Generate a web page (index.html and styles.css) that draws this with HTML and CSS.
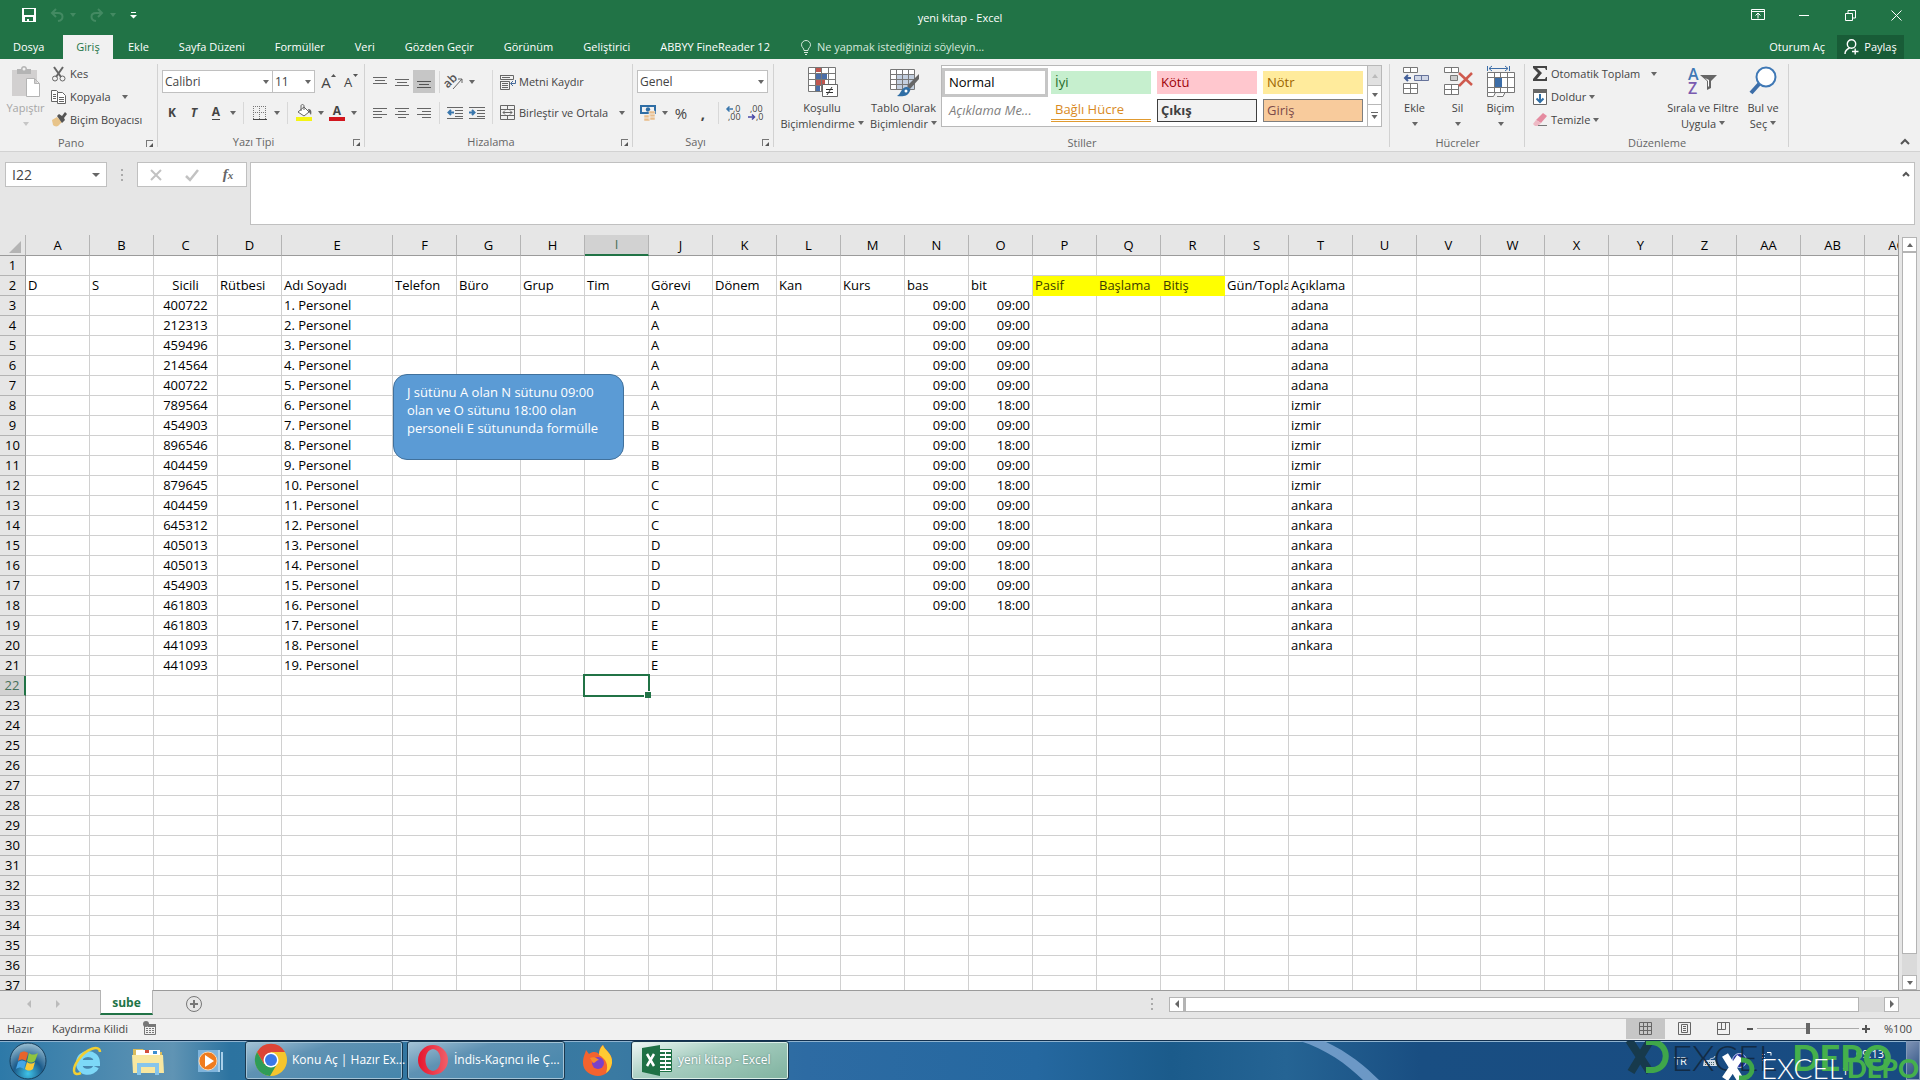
FILE: index.html
```html
<!DOCTYPE html>
<html lang="tr">
<head>
<meta charset="utf-8">
<title>yeni kitap - Excel</title>
<link rel="stylesheet" href="styles.css">
</head>
<body>
<div class="app">
  <header class="titlebar">
    <div class="quick">
      <button aria-label="Kaydet"><svg width="14" height="14" viewBox="0 0 14 14"><path fill="#fff" fill-rule="evenodd" d="M0 0h14v14H0zM2 1v6h10V1zM3 9v4h2v-2h2v2h4V9z"/></svg></button>
      <button class="dim" aria-label="Geri Al"><svg width="14" height="14" viewBox="0 0 14 14"><path fill="none" stroke="#438a62" stroke-width="2" d="M6 1 2 5l4 4M2 5h6c6 0 6 7 0 8"/></svg><i class="caret"></i></button>
      <button class="dim" aria-label="Yinele"><svg width="14" height="14" viewBox="0 0 14 14"><path fill="none" stroke="#438a62" stroke-width="2" d="m8 1 4 4-4 4M12 5H6c-6 0-6 7 0 8"/></svg><i class="caret"></i></button>
      <button aria-label="Özelleştir"><svg width="7" height="7" viewBox="0 0 7 7"><path fill="#fff" d="M1 0h5v1H1zM0 3h7L3.500 6.500z"/></svg></button>
    </div>
    <h1>yeni kitap - Excel</h1>
    <div class="window-buttons">
      <button aria-label="Şerit Görüntüleme"><svg width="14" height="12" viewBox="0 0 14 12" fill="none" stroke="#fff"><path d="M.5.5h13v10H.5zM.5 2.500h13M7 9.500v-5M4.500 6.500 7 4l2.500 2.500"/></svg></button>
      <button aria-label="Simge Durumuna Küçült"><svg width="10" height="12" viewBox="0 0 10 12"><path stroke="#fff" d="M0 6.500h10"/></svg></button>
      <button aria-label="Önceki Boyut"><svg width="11" height="11" viewBox="0 0 11 11" fill="none" stroke="#fff"><path d="M.5 3.500h7v7h-7zM3 3V.5h7.500V8H8"/></svg></button>
      <button aria-label="Kapat"><svg width="11" height="11" viewBox="0 0 11 11"><path stroke="#fff" d="m.5.500 10 10M10.500.5l-10 10"/></svg></button>
    </div>
  </header>

  <nav class="tabs">
    <a href="#dosya" class="file">Dosya</a>
    <a href="#giris" class="active">Giriş</a>
    <a href="#ekle">Ekle</a>
    <a href="#sayfa">Sayfa Düzeni</a>
    <a href="#formuller">Formüller</a>
    <a href="#veri">Veri</a>
    <a href="#gozden">Gözden Geçir</a>
    <a href="#gorunum">Görünüm</a>
    <a href="#gelistirici">Geliştirici</a>
    <a href="#abbyy">ABBYY FineReader 12</a>
    <a href="#ara" class="tell"><svg width="12" height="15" viewBox="0 0 12 15" fill="none" stroke="#d5e8dc"><path d="M4 10.500C4 8 1.500 7.500 1.500 4.800a4.500 4.300 0 0 1 9 0C10.500 7.500 8 8 8 10.500zM4 12.500h4M5 14.500h2"/></svg>Ne yapmak istediğinizi söyleyin...</a>
    <span class="spacer"></span>
    <a href="#oturum" class="signin">Oturum Aç</a>
    <button class="share"><svg width="15" height="16" viewBox="0 0 15 16" fill="none" stroke="#fff" stroke-width="1.400"><circle cx="7.500" cy="5" r="4.200"/><path d="M1 15c0-3 2-5 4.500-6M8 12.500h6.500M11.200 9.500v6"/></svg>Paylaş</button>
  </nav>

  <section class="ribbon" aria-label="Giriş şeridi">
    <div class="group g-clip">
      <div class="content">
        <button class="big disabled"><svg width="32" height="32" viewBox="0 0 32 32"><path fill="#d2d0d0" d="M2 4h25v26H2z"/><path fill="#b4b4b4" d="M7 3h4c0-4 6-4 6 0h4v5H7z"/><circle cx="14" cy="3" r="1.500" fill="#f1f1f1"/><path fill="#fff" stroke="#b4b4b4" d="M16.500 12.500h8l5 5v13h-13zM24.500 12.500v5h5"/></svg><span>Yapıştır</span><i class="caret"></i></button>
        <div class="list">
          <button><svg width="16" height="16" viewBox="0 0 16 16" fill="none" stroke="#666"><path stroke-width="2" d="m3 1 7 10M12 1 5 11"/><circle cx="4" cy="12.500" r="2.500"/><circle cx="11.500" cy="12.500" r="2.500"/></svg>Kes</button>
          <button><svg width="16" height="16" viewBox="0 0 16 16" fill="#fff" stroke="#666"><path d="M.5 1.500h5l3 3v8h-8zM2 5.500h3M2 7.500h3M2 9.500h3"/><path d="M6.500 3.500h5l3 3v8h-8zM8 8.500h5M8 10.500h5M8 12.500h5"/></svg>Kopyala<i class="caret far"></i></button>
          <button><svg width="16" height="16" viewBox="0 0 16 16"><path fill="#e8c48a" d="M1 8 6 5l5 5-4 4c-2 1-4 0-5-1z"/><path fill="#555" d="m6 4 2-2 3 2 3-4 2 2-3 4 1 2-3 3z"/></svg>Biçim Boyacısı</button>
        </div>
      </div>
      <div class="label">Pano<button class="launcher" aria-label="Pano ayarları"></button></div>
    </div>

    <div class="group g-font">
      <div class="content rows">
        <div class="row fields">
          <span class="combo w-font"><select aria-label="Yazı tipi"><option>Calibri</option></select><i class="caret"></i></span>
          <span class="combo w-size"><select aria-label="Yazı boyutu"><option>11</option></select><i class="caret"></i></span>
          <button class="ic" aria-label="Büyüt"><span class="ltr">A</span><svg class="sup" width="5" height="3"><path fill="#555" d="M0 3h5L2.500 0z"/></svg></button>
          <button class="ic" aria-label="Küçült"><span class="ltr small">A</span><svg class="sup" width="5" height="3"><path fill="#555" d="M0 0h5L2.500 3z"/></svg></button>
        </div>
        <div class="row tools">
          <button class="ic"><b>K</b></button><button class="ic"><b><em>T</em></b></button><button class="ic"><b class="under">A</b></button><button class="drop" aria-label="Altı çizili seçenekleri"><i class="caret"></i></button>
          <span class="sep wide"></span>
          <button class="ic" aria-label="Kenarlıklar"><svg width="14" height="14" viewBox="0 0 14 14" fill="none" stroke="#777"><path stroke-dasharray="1 1" d="M0 .5h13M.5 0v13M12.500 0v13M6.500 0v13M0 6.500h13"/><path stroke="#444" d="M0 13.500h14"/></svg></button><button class="drop" aria-label="Kenarlık seçenekleri"><i class="caret"></i></button>
          <span class="sep wide"></span>
          <button class="ic" aria-label="Dolgu rengi"><svg width="18" height="18" viewBox="0 0 18 18"><path fill="#f4f413" d="M1 13h16v4H1z"/><path fill="#fff" stroke="#666" d="m9 3 5 5-5 4-6-4z"/><path fill="none" stroke="#666" d="M6 7V2c0-2 3-2 3 0v4"/><path fill="#666" d="M13 5c3 0 4 2 3 6l-2-3z"/></svg></button><button class="drop" aria-label="Dolgu seçenekleri"><i class="caret"></i></button>
          <button class="ic fontcolor"><b>A</b></button><button class="drop" aria-label="Yazı rengi seçenekleri"><i class="caret"></i></button>
        </div>
      </div>
      <div class="label">Yazı Tipi<button class="launcher" aria-label="Yazı tipi ayarları"></button></div>
    </div>

    <div class="group g-align">
      <div class="content">
        <div class="rows">
          <div class="row">
            <button class="ic" aria-label="Üste hizala"><svg width="14" height="14"><path stroke="#666" d="M0 2.500h14M2 5.500h10M0 8.500h14"/></svg></button><button class="ic" aria-label="Ortaya hizala"><svg width="14" height="14"><path stroke="#666" d="M0 4.500h14M2 7.500h10M0 10.500h14"/></svg></button><button class="ic on" aria-label="Alta hizala"><svg width="14" height="14"><path stroke="#555" d="M0 6.500h14M2 9.500h10M0 12.500h14"/></svg></button>
            <span class="sep"></span>
            <button class="ic" aria-label="Yönlendirme"><svg width="16" height="16" viewBox="0 0 16 16"><text x="-2" y="10" transform="rotate(-45 5 9)" font-size="12" font-weight="600" font-family="Open Sans, sans-serif" fill="#555">ab</text><path fill="none" stroke="#666" d="M6 15 15 5M11 5h4v4"/></svg></button><button class="drop" aria-label="Yönlendirme seçenekleri"><i class="caret"></i></button>
          </div>
          <div class="row">
            <button class="ic" aria-label="Sola hizala"><svg width="14" height="14"><path stroke="#666" d="M0 2.500h14M0 5.500h9M0 8.500h14M0 11.500h9"/></svg></button><button class="ic" aria-label="Ortala"><svg width="14" height="14"><path stroke="#666" d="M0 2.500h14M3 5.500h8M0 8.500h14M3 11.500h8"/></svg></button><button class="ic" aria-label="Sağa hizala"><svg width="14" height="14"><path stroke="#666" d="M0 2.500h14M5 5.500h9M0 8.500h14M5 11.500h9"/></svg></button>
            <span class="sep"></span>
            <button class="ic" aria-label="Girintiyi azalt"><svg width="16" height="14" fill="none"><path stroke="#666" d="M0 1.500h16M8 4.500h8M8 7.500h8M0 12.500h16M8 10.500h8"/><path stroke="#3a77ad" stroke-width="2" d="M7 6.500H1M4 4 1.500 6.500 4 9"/></svg></button><button class="ic" aria-label="Girintiyi artır"><svg width="16" height="14" fill="none"><path stroke="#666" d="M0 1.500h16M8 4.500h8M8 7.500h8M0 12.500h16M8 10.500h8"/><path stroke="#3a77ad" stroke-width="2" d="M0 6.500h6M3 4l2.500 2.500L3 9"/></svg></button>
          </div>
        </div>
        <span class="sep tall"></span>
        <div class="rows wraps">
          <button class="row"><svg width="16" height="16" viewBox="0 0 16 16" fill="none" stroke="#666"><path d="M.5 1v4.500h13V1.500H.5M2 3.500h8M.5 7v8.500h9V7.500H.5M2 9.500h6M2 11.500h6M2 13.500h6"/><path stroke="#44699a" d="M15.500 6v3.500H11M13 7l-2.500 2.500L13 12"/></svg>Metni Kaydır</button>
          <button class="row"><svg width="16" height="16" viewBox="0 0 16 16" fill="none" stroke="#666"><path d="M.5.5h14v14H.5zM.5 4.500h14M.5 10.500h14M7.500 1v3M7.500 11v3M3 7.500h9M5 5.500l-2 2 2 2M10 5.500l2 2-2 2"/></svg>Birleştir ve Ortala<i class="caret far"></i></button>
        </div>
      </div>
      <div class="label">Hizalama<button class="launcher" aria-label="Hizalama ayarları"></button></div>
    </div>

    <div class="group g-number">
      <div class="content rows">
        <div class="row"><span class="combo w-num"><select aria-label="Sayı biçimi"><option>Genel</option></select><i class="caret"></i></span></div>
        <div class="row">
          <button class="ic" aria-label="Para birimi"><svg width="16" height="16" viewBox="0 0 16 16"><path fill="none" stroke="#2f6ea5" stroke-width="2" d="M1 1h14v7H1z"/><circle cx="8" cy="4.500" r="2.200" fill="#2f6ea5"/><path fill="#e9bd8b" stroke="#f1f1f1" stroke-width=".5" d="M9 6h6v3H9zM9 9h6v3H9zM9 12h6v3H9zM4 10h6v3H4zM4 13h6v3H4z"/></svg></button><button class="drop" aria-label="Para birimi seçenekleri"><i class="caret"></i></button><button class="ic pct">%</button><button class="ic pct"><b>,</b></button>
          <span class="sep"></span>
          <button class="ic" aria-label="Ondalığı artır"><svg width="16" height="16" viewBox="0 0 16 16" font-family="Open Sans, sans-serif" font-size="9" fill="#444"><text x="7" y="7">,0</text><text x="2" y="15">,00</text><path fill="none" stroke="#3a77ad" stroke-width="1.500" d="M7 4H1M3.500 1.500 1 4l2.500 2.500"/></svg></button><button class="ic" aria-label="Ondalığı azalt"><svg width="16" height="16" viewBox="0 0 16 16" font-family="Open Sans, sans-serif" font-size="9" fill="#444"><text x="2" y="7">,00</text><text x="8" y="15">,0</text><path fill="none" stroke="#4a4aa8" stroke-width="1.500" d="M0 12h6M4 9.500 6.500 12 4 14.500"/></svg></button>
        </div>
      </div>
      <div class="label">Sayı<button class="launcher" aria-label="Sayı ayarları"></button></div>
    </div>

    <div class="group g-styles">
      <div class="content">
        <button class="big b-cond"><svg width="32" height="32" viewBox="0 0 32 32"><path fill="#fff" d="M2 1h27v24H2z"/><path fill="#c0564f" d="M9 1h6v5H9zM9 13h10v6H9z"/><path fill="#4a6ea8" d="M9 7h12v6H9zM9 19h5v6H9z"/><path fill="none" stroke="#777" d="M2.500 1.500h27v24h-27zM9.500 1v24M15.500 1v24M22.500 1v24M2 7.500h27M2 13.500h27M2 19.500h27"/><path fill="#fff" stroke="#666" d="M16.500 18.500h15v12h-15z"/><path fill="none" stroke="#333" d="M20 23.500h7M20 26.500h7M26 21l-5 8"/></svg><span>Koşullu<br>Biçimlendirme<i class="caret inl"></i></span></button>
        <button class="big b-table"><svg width="32" height="32" viewBox="0 0 32 32"><path fill="#fff" d="M2 3h25v21H2z"/><path fill="#c3cfdf" d="M8 8h18v16H8z"/><path fill="none" stroke="#777" d="M2.500 3.500h24v20h-24zM8.500 3v20M14.500 3v20M20.500 3v20M2 8.500h24M2 13.500h24M2 18.500h24"/><path fill="#666" d="M31 8v5l-9 10-3-3z"/><path fill="#2f6ea5" d="M18 21c3 0 5 2 4 4-2 5-7 6-13 5 4-2 4-8 9-9z"/><circle cx="18" cy="25" r="1.500" fill="#fff"/></svg><span>Tablo Olarak<br>Biçimlendir<i class="caret inl"></i></span></button>
        <div class="gallery">
          <div class="swatches">
            <button class="s-normal">Normal</button><button class="s-good">İyi</button><button class="s-bad">Kötü</button><button class="s-neutral">Nötr</button>
            <button class="s-note">Açıklama Me...</button><button class="s-linked">Bağlı Hücre</button><button class="s-output">Çıkış</button><button class="s-input">Giriş</button>
          </div>
          <div class="gallery-nav">
            <button class="off" aria-label="Yukarı"><i class="caret up"></i></button><button aria-label="Aşağı"><i class="caret"></i></button><button class="more" aria-label="Diğer"><svg width="7" height="7" viewBox="0 0 7 7"><path fill="#666" d="M0 0h7v1H0zM.5 3h6L3.500 7z"/></svg></button>
          </div>
        </div>
      </div>
      <div class="label plain">Stiller</div>
    </div>

    <div class="group g-cells">
      <div class="content">
        <button class="big"><svg width="32" height="32" viewBox="0 0 32 32" fill="#fff" stroke="#777"><path d="M4.500 1.500h14v5h-14zM11.500 1v5M4.500 17.500h14v10h-14zM11.500 17v10M4 22.500h14"/><path fill="#cfd6e6" stroke="#66739a" d="M15.500 9.500h14v5h-14zM22.500 9v5"/><path stroke="#44609a" stroke-width="2" fill="none" d="M12 12H6M9 9l-3 3 3 3"/></svg><span>Ekle</span><i class="caret"></i></button>
        <button class="big"><svg width="32" height="32" viewBox="0 0 32 32" fill="#fff" stroke="#777"><path d="M2.500 1.500h14v5h-14zM9.500 1v5M2.500 18.500h14v10h-14zM9.500 18v10M2 23.500h14"/><path fill="#ccc" d="M8.500 9.500h7v5h-7z"/><path stroke="#cf5a4e" stroke-width="2.500" fill="none" d="m17 7 13 12M30 7 17 20"/></svg><span>Sil</span><i class="caret"></i></button>
        <button class="big"><svg width="32" height="32" viewBox="0 0 32 32" fill="#fff" stroke="#777"><path d="M2.500 6.500h27v20h-27zM9.500 6v20M15.500 6v20M22.500 6v20M2 11.500h27M2 21.500h27M2.500 26.500v4h6l2-4M12 30.500h6l2-4"/><path fill="#3d6ea8" stroke="none" d="M10 12h7v9h-7z"/><path stroke="#3d6ea8" fill="none" d="M2.500 0v5M24.500 0v5M4 2.500h19M7 0 4 2.500 7 5M20 0l3 2.500L20 5"/></svg><span>Biçim</span><i class="caret"></i></button>
      </div>
      <div class="label plain">Hücreler</div>
    </div>

    <div class="group g-edit">
      <div class="content">
        <div class="list">
          <button><svg width="16" height="16" viewBox="0 0 16 16"><path fill="#444" d="M1 0h14v4h-1l-1-2H5l5 5-5 6h8l1-2h1v4H1v-2l5-6-5-5z"/></svg>Otomatik Toplam<i class="caret far"></i></button>
          <button><svg width="16" height="16" viewBox="0 0 16 16"><path fill="#fff" stroke="#666" d="M1.500.5h13v15h-13z"/><path fill="#666" d="M1 0h14v4H1z"/><path fill="none" stroke="#2f6ea5" stroke-width="2" d="M8 5v8M4.500 9.500 8 13l3.500-3.500"/></svg>Doldur<i class="caret"></i></button>
          <button><svg width="16" height="16" viewBox="0 0 16 16"><path fill="#e58ba0" d="m11 1 4 3-6 7-5-3z"/><path fill="#eeb9c4" d="m4 8 5 3-3 3H3l-2-2z"/><path stroke="#777" d="M6 13.500h9"/></svg>Temizle<i class="caret"></i></button>
        </div>
        <button class="big b-sort"><svg width="32" height="32" viewBox="0 0 32 32"><text x="1" y="14" font-family="Open Sans, sans-serif" font-size="16" font-weight="600" fill="#3f78b5">A</text><text x="1" y="28" font-family="Open Sans, sans-serif" font-size="16" font-weight="600" fill="#7a5bb0">Z</text><path fill="#666" d="M13 9h17l-6 6v7l-4 2v-9z"/><path fill="#fff" d="m18 12 3 3v6l1-1v-6z"/></svg><span>Sırala ve Filtre<br>Uygula<i class="caret inl"></i></span></button>
        <button class="big b-find"><svg width="32" height="32" viewBox="0 0 32 32"><path stroke="#3d6ea8" stroke-width="4" d="M13 17 4 27"/><circle cx="19" cy="11" r="9.500" fill="#fff" stroke="#3f78b5" stroke-width="2"/></svg><span>Bul ve<br>Seç<i class="caret inl"></i></span></button>
      </div>
      <div class="label plain">Düzenleme</div>
    </div>
    <button class="collapse" aria-label="Şeridi daralt"><svg width="10" height="6"><path fill="none" stroke="#555" stroke-width="2" d="m1 5 4-4 4 4"/></svg></button>
  </section>

  <section class="formula" aria-label="Formül çubuğu">
    <span class="namebox"><input aria-label="Ad kutusu" value="I22"><i class="caret big-caret"></i></span>
    <span class="grip"></span>
    <div class="fx">
      <button aria-label="İptal"><svg width="12" height="12"><path stroke="#c2c2c2" stroke-width="2" d="m1 1 10 10M11 1 1 11"/></svg></button>
      <button aria-label="Gir"><svg width="14" height="12"><path fill="none" stroke="#c2c2c2" stroke-width="2.500" d="m1 7 4 4 8-10"/></svg></button>
      <button class="fn"><em>f<small>x</small></em></button>
    </div>
    <div class="fbox"><textarea aria-label="Formül"></textarea><button aria-label="Formül çubuğunu daralt"><svg width="8" height="6"><path fill="none" stroke="#555" stroke-width="2" d="m1 5 3-3 3 3"/></svg></button></div>
  </section>

  <main class="sheet">
    <div class="viewport">
      <table id="grid"></table>
      <div class="callout">J sütünu A olan N sütunu 09:00 olan ve O sütunu 18:00 olan personeli E sütununda formülle</div>
    </div>
    <div class="vscroll">
      <button aria-label="Yukarı kaydır"><i class="caret up"></i></button>
      <div class="thumb"></div>
      <div class="track"></div>
      <button aria-label="Aşağı kaydır"><i class="caret"></i></button>
    </div>
  </main>

  <div class="sheetbar">
    <div class="sheetnav"><i class="caret left"></i><i class="caret right"></i></div>
    <a href="#sube" class="sheettab">sube</a>
    <button class="add" aria-label="Yeni sayfa"><svg width="16" height="16" fill="none" stroke="#777"><circle cx="8" cy="8" r="7.500"/><path stroke-width="2" d="M4 8h8M8 4v8"/></svg></button>
    <span class="spacer"></span>
    <span class="grip"></span>
    <div class="hscroll">
      <button aria-label="Sola kaydır"><i class="caret left"></i></button>
      <div class="hthumb"></div>
      <div class="htrack"></div>
      <button aria-label="Sağa kaydır"><i class="caret right"></i></button>
    </div>
  </div>

  <footer class="status">
    <span class="ready">Hazır</span><span class="lock">Kaydırma Kilidi</span>
    <svg width="13" height="13" viewBox="0 0 13 13"><path fill="#f1f1f1" stroke="#777" d="M1.500 2.500h11v10h-11z"/><path fill="#777" d="M5 2h8v3H5z"/><path stroke="#777" stroke-dasharray="2 1" d="M3 6.500h9M3 8.500h9M3 10.500h9"/><circle cx="3" cy="2" r="3" fill="#777"/></svg>
    <span class="spacer"></span>
    <button class="view on" aria-label="Normal"><svg width="13" height="13" fill="none" stroke="#666"><path d="M.5.5h12v12H.5zM4.500 0v13M8.500 0v13M0 4.500h13M0 8.500h13"/></svg></button>
    <button class="view" aria-label="Sayfa düzeni"><svg width="13" height="13" fill="none" stroke="#666"><path d="M.5.5h12v12H.5zM3.500 2.500h6v8h-6zM5 4.500h3M5 6.500h3M5 8.500h3"/></svg></button>
    <button class="view" aria-label="Sayfa sonu"><svg width="13" height="13" fill="none" stroke="#666"><path d="M.5.5h12v12H.5zM4.500 0v7.500h4V0M0 7.500h5"/></svg></button>
    <button class="zoom-btn" aria-label="Uzaklaştır"><svg width="8" height="8"><path stroke="#555" stroke-width="2" d="M1 4h6"/></svg></button>
    <input type="range" min="0" max="100" value="50" aria-label="Yakınlaştırma">
    <button class="zoom-btn" aria-label="Yakınlaştır"><svg width="8" height="8"><path stroke="#555" stroke-width="2" d="M0 4h8M4 0v8"/></svg></button>
    <span class="pctval">%100</span>
  </footer>

  <div class="taskbar">
    <svg class="streak" width="110" height="40" viewBox="0 0 110 40" aria-hidden="true"><path fill="#7aa3d0" opacity=".85" d="M0 0h24c26 12 42 26 56 40H64C48 24 26 8 0 0z"/></svg>
    <button class="pin orb" aria-label="Başlat"><svg width="38" height="38" viewBox="0 0 38 38"><defs><radialGradient id="orb" cx=".5" cy=".85" r=".8"><stop offset="0" stop-color="#3fc4e8"/><stop offset=".5" stop-color="#1c5c8c"/><stop offset="1" stop-color="#8fb6cc"/></radialGradient></defs><circle cx="19" cy="19" r="18" fill="url(#orb)" stroke="#173f5c"/><path fill="#e8642c" d="M11 11c3-2 5-2 8 0l-2 8c-3-2-5-2-8 0z"/><path fill="#8fc43f" d="M20 11c3 2 5 2 9 0l-3 8c-3 2-5 2-8 0z"/><path fill="#45a5e6" d="M9 20c3-2 5-2 8 0l-2 7c-3-2-5-2-8 0z"/><path fill="#fbc936" d="M18 20c3 2 5 2 8 0l-2 7c-3 2-5 2-8 0z"/></svg></button>
    <button class="pin" aria-label="Internet Explorer"><svg width="32" height="32" viewBox="0 0 32 32" fill="none"><path stroke="#7dd8f7" stroke-width="6" d="M9 18h18c0-12-18-12-18 0 0 11 14 11 17 4"/><path stroke="#f2cf32" stroke-width="2.500" d="M30 7c0-8-14-3-21 7-7 9-7 18 2 14"/></svg></button>
    <button class="pin" aria-label="Dosya Gezgini"><svg width="34" height="32" viewBox="0 0 34 32"><path fill="#d9bc5c" d="M2 4h10l2 3h17v20H2z"/><path fill="#fff" d="M5 5h24v6H5z"/><path fill="#d34d3b" d="M14 5h4v3h-4z"/><path fill="#3d8ed0" d="M22 6h4v3h-4z"/><path fill="#f8e7a0" d="M1 10h31l1 18H2z"/><path fill="none" stroke="#86c5ec" stroke-width="4" d="M8 30V20h18v10"/></svg></button>
    <button class="pin" aria-label="Media Player"><svg width="28" height="28" viewBox="0 0 28 28"><path fill="#7fb4dc" d="M2 3h22v22H2z"/><path fill="#a9cfe9" d="M22 3h2v22h-2zM25 5h2v18h-2z"/><circle cx="12" cy="14" r="9" fill="#ef7c1f" stroke="#fbd6ae"/><path fill="#fff" d="m9 8 9 6-9 6z"/></svg></button>
    <button class="task"><svg width="32" height="32" viewBox="0 0 32 32"><circle cx="16" cy="16" r="16" fill="#f5c52e"/><path fill="#dc4437" d="M2 8a16 16 0 0 1 28 0H16l-7 12z"/><path fill="#2f9c57" d="M2 8a16 16 0 0 0 13 24l7-12H9z"/><circle cx="16" cy="16" r="7.500" fill="#fff"/><circle cx="16" cy="16" r="6" fill="#3b78e7"/></svg>Konu Aç | Hazır Ex...</button>
    <button class="task"><svg width="32" height="32" viewBox="0 0 32 32"><defs><linearGradient id="op" x2="1"><stop offset="0" stop-color="#e8152d"/><stop offset="1" stop-color="#f0606a"/></linearGradient></defs><path fill="url(#op)" fill-rule="evenodd" d="M16 1a15 15 0 1 1 0 30 15 15 0 1 1 0-30zm0 4c-10 1-10 21 0 22 10-1 10-21 0-22z"/></svg>İndis-Kaçıncı ile Ç...</button>
    <button class="pin fox" aria-label="Firefox"><svg width="32" height="32" viewBox="0 0 32 32"><path fill="#f4632f" d="M4 5l3 4c4-3 8-2 10 0 0-4 1-7 4-9 1 5 10 8 9 18-1 8-7 13-14 13S1 26 1 18C1 12 3 9 4 5z"/><path fill="#ffcb32" d="M21 0c1 5 10 8 9 18-1 5-3 8-6 10 3-8 0-14-7-18 0-4 1-7 4-10z"/><circle cx="16" cy="18" r="6" fill="#7a42c8"/><path fill="#f88b2b" d="M8 13c4-2 7 0 9 2-3 0-3 3-6 3z"/></svg></button>
    <button class="task current"><svg width="32" height="32" viewBox="0 0 32 32"><path fill="#fff" stroke="#1e7145" d="M16.500 5.500h14v22h-14z"/><path stroke="#1e7145" stroke-width="2" stroke-dasharray="5 1" d="M19 9h11M19 13h11M19 17h11M19 21h11M19 25h11"/><path fill="#1e7145" d="M1 4 19 1v31L1 28z"/><path fill="none" stroke="#fff" stroke-width="2.500" d="m6 10 7 12M13 10 6 22"/></svg>yeni kitap - Excel</button>
    <span class="spacer"></span>
    <div class="tray">
      <span class="lang">TR</span>
      <svg width="14" height="10" viewBox="0 0 14 10"><path fill="#d5dde8" d="M1 4h11l2 6H0z"/><path stroke="#466" stroke-dasharray="1 1" d="M2 6.500h10M2 8.500h10"/><path fill="none" stroke="#d5dde8" d="M7 4c0-3 4 0 5-4"/></svg>
      <svg width="15" height="15" viewBox="0 0 15 15"><circle cx="7.500" cy="7.500" r="7" fill="#24309c" stroke="#c9d2f5"/></svg>
      <svg width="10" height="20" viewBox="0 0 10 20" fill="none" stroke="#fff"><path d="M0 3.500h3M0 6.500h3M0 9.500h4M5 1.500h4v3"/></svg>
      <div class="clock"><span>09:13</span><span>1</span></div>
    </div>
    <button class="desktop" aria-label="Masaüstünü göster"></button>
    <div class="mark one" aria-hidden="true"><svg width="43" height="34" viewBox="0 0 43 34"><path stroke="#173a4c" stroke-width="8" d="m3 1 21 32M24 2 5 33"/><path fill="none" stroke="#3fa64a" stroke-width="6" d="M20 3h7c17 2 17 26 0 28h-7"/></svg><span class="thin">EXCEL</span><span class="fat">DEPO</span></div>
    <div class="mark two" aria-hidden="true"><svg width="34" height="28" viewBox="0 0 34 28"><path stroke="#fff" stroke-width="7" d="m3 2 15 24M18 4 3 26"/><path fill="none" stroke="#3fa64a" stroke-width="5" d="M19 7h2c12 1 12 17 0 18h-4"/></svg><span class="thin">EXCEL</span><span class="fat">DEPO</span></div>
  </div>
</div>
<script src="script.js"></script>
</body>
</html>
```
FILE: styles.css
```css
* { box-sizing: border-box; }
body {
  margin: 0;
  font: 11px/16px "Open Sans", "Noto Sans", sans-serif;
  color: #444;
  background: #e6e6e6;
  overflow: hidden;
}
button, input, select, textarea { font: inherit; color: inherit; margin: 0; padding: 0; border: 0; background: none; border-radius: 0; outline: 0; }
a { color: inherit; text-decoration: none; }
svg { display: block; flex: none; overflow: visible; }
.app { height: 100vh; display: flex; flex-direction: column; }
.spacer { flex: 1; }

.caret { display: inline-block; flex: none; border: 3px solid transparent; border-top: 4px solid #666; border-bottom: 0; }
.caret.up { border-top: 0; border-bottom: 4px solid #666; }
.caret.left { border: 4px solid transparent; border-right: 4px solid #666; border-left: 0; }
.caret.right { border: 4px solid transparent; border-left: 4px solid #666; border-right: 0; }
.caret.inl { margin-left: 3px; vertical-align: 3px; }
.caret.big-caret { border-width: 4px 4px 0; }

/* title bar */
.titlebar { position: relative; height: 35px; background: #217346; display: flex; justify-content: space-between; color: #fff; }
.titlebar h1 { margin: 0; font-size: 11px; font-weight: 400; line-height: 36px; position: absolute; inset: 0; text-align: center; pointer-events: none; }
.quick { display: flex; align-items: center; height: 30px; padding-left: 22px; gap: 14px; }
.quick button { display: flex; align-items: center; gap: 6px; }
.quick .caret { border-top-color: #438a62; }
.window-buttons { display: flex; align-items: center; height: 30px; padding-right: 1px; }
.window-buttons button { width: 46px; display: flex; justify-content: center; }

/* ribbon tabs */
.tabs { height: 24px; background: #217346; color: #fff; display: flex; align-items: stretch; line-height: 24px; white-space: nowrap; padding-right: 16px; }
.tabs a { padding: 0 15px; }
.tabs .file { width: 63px; padding: 0 13px; }
.tabs .active { width: 50px; padding: 0; text-align: center; background: #f1f1f1; color: #217346; }
.tabs .tell { display: flex; align-items: center; gap: 5px; color: #d5e8dc; }
.tabs .signin { padding: 0 12px; }
.share { background: #185c37; width: 67px; display: flex; align-items: center; justify-content: center; gap: 5px; color: #fff; }

/* ribbon */
.ribbon { height: 93px; background: #f1f1f1; border-bottom: 1px solid #d2d2d2; display: flex; white-space: nowrap; }
.group { flex: none; display: flex; flex-direction: column; position: relative; }
.group::after { content: ""; position: absolute; right: 0; top: 5px; bottom: 4px; width: 1px; background: #d2d2d2; }
.g-clip { width: 158px; } .g-font { width: 207px; } .g-align { width: 268px; } .g-number { width: 141px; }
.g-styles { width: 616px; } .g-cells { width: 135px; } .g-edit { width: 264px; }
.content { flex: 1; display: flex; }
.label { height: 16px; margin-bottom: 1px; display: flex; align-items: center; justify-content: center; padding-right: 16px; color: #666; position: relative; }
.label.plain { padding-right: 0; }
.launcher { position: absolute; right: 5px; top: 5px; width: 7px; height: 7px; border-left: 1px solid #777; border-top: 1px solid #777; }
.launcher::after { content: ""; position: absolute; right: 0; bottom: 0; border: 2px solid transparent; border-right-color: #555; border-bottom-color: #555; }
.big { display: flex; flex-direction: column; align-items: center; width: 43px; padding-top: 7px; height: 76px; }
.big svg { margin-bottom: 2px; }
.big > .caret { margin-top: 6px; }
.disabled { color: #a6a6a6; }
.disabled > .caret { border-top-color: #c6c6c6; }
.list { padding-top: 3px; }
.list button { display: flex; align-items: center; height: 23px; gap: 3px; }
.caret.far { margin-left: 8px; }
.rows { display: flex; flex-direction: column; gap: 8px; padding-top: 11px; }
.row { display: flex; align-items: center; height: 23px; }
.ic { width: 22px; height: 23px; display: flex; align-items: center; justify-content: center; flex: none; position: relative; }
.ic.on { background: #c6c6c6; }
.drop { width: 11px; height: 23px; display: flex; align-items: center; justify-content: center; flex: none; }
.sep { width: 1px; height: 22px; background: #d8d8d8; margin: 0 4px; flex: none; }
.sep.wide { margin: 0 5px; }
.sep.tall { height: 54px; margin-top: 11px; }
.combo { position: relative; display: flex; height: 23px; }
.combo select { appearance: none; width: 100%; height: 100%; border: 1px solid #c0c0c0; background: #fff; padding: 0 2px; font-size: 12px; }
.combo .caret { position: absolute; right: 4px; top: 10px; pointer-events: none; }
.w-font { width: 111px; } .w-size { width: 43px; } .w-num { width: 131px; }
.fields .w-size { margin-left: -1px; }
.ltr { font-size: 15px; } .ltr.small { font-size: 13px; }
.sup { position: absolute; top: 4px; right: 1px; }
.g-clip .content { padding-left: 4px; }
.g-clip .list { padding-left: 4px; }
.g-font .content { padding-left: 3px; }
.g-font .fields { padding-left: 1px; }
.g-font b { font-size: 12px; }
.under { border-bottom: 1px solid #444; line-height: 14px; }
.fontcolor b { border-bottom: 4px solid #d2161e; width: 16px; line-height: 13px; text-align: center; }
.g-align .content, .g-number .content { padding-left: 4px; }
.g-align .wraps { padding-left: 3px; }
.g-align .wraps .row { gap: 3px; }
.pct { font-size: 15px; }
.g-styles .content { padding-left: 4px; }
.b-cond { width: 88px; } .b-table { width: 75px; }
.b-sort { width: 80px; } .b-find { width: 40px; }
.g-cells .content { padding-left: 3px; }
.g-edit .content { padding-left: 7px; }
.g-edit .list { width: 131px; }
.gallery { margin-top: 6px; height: 62px; border: 1px solid #b8b8b8; background: #fff; display: flex; }
.swatches { display: grid; grid-template-columns: repeat(4, 100px); grid-auto-rows: 23px; gap: 5px 6px; padding: 5px 4px 5px 3px; }
.swatches button { text-align: left; padding: 0 0 2px 4px; font-size: 13px; line-height: 20px; overflow: hidden; }
.swatches .s-normal { box-shadow: 0 0 0 3px #c6c6c6; color: #000; }
.s-good { background: #c6efce; color: #1f6b2a; }
.s-bad { background: #ffc7ce; color: #9c0006; }
.s-neutral { background: #ffeb9c; color: #9c6500; }
.s-note { color: #7f7f7f; font-style: italic; }
.s-linked { color: #d98a1e; }
.swatches .s-linked { border-bottom: 3px double #e09a30; padding-bottom: 0; }
.swatches .s-output { border: 1px solid #3f3f3f; background: #f2f2f2; color: #3f3f3f; font-weight: 700; padding-left: 3px; }
.swatches .s-input { border: 1px solid #7f7f7f; background: #f8cb9c; color: #7c4a4a; padding-left: 3px; }
.gallery-nav { width: 14px; display: grid; grid-template-rows: 20px 19px 1fr; border-left: 1px solid #b8b8b8; }
.gallery-nav button { display: flex; align-items: center; justify-content: center; border-bottom: 1px solid #b8b8b8; }
.gallery-nav .off { background: #e1e1e1; }
.gallery-nav .off .caret { border-bottom-color: #bbb; }
.gallery-nav .more { border: 0; }
.collapse { margin-left: auto; margin-right: 10px; align-self: flex-end; height: 18px; }

/* formula bar */
.formula { flex: none; height: 83px; padding: 10px 5px; display: flex; align-items: flex-start; }
.namebox { width: 102px; height: 25px; border: 1px solid #c0c0c0; background: #fff; display: flex; align-items: center; padding: 0 6px; }
.namebox input { flex: 1; min-width: 0; font-size: 14px; }
.grip { width: 2px; height: 12px; background: repeating-linear-gradient(#aaa 0 2px, transparent 2px 5px); }
.formula .grip { margin: 7px 14px 0; }
.fx { width: 110px; height: 25px; border: 1px solid #c0c0c0; background: #fff; display: flex; }
.fx button { flex: 1; display: flex; align-items: center; justify-content: center; }
.fx .fn { font: 700 15px/20px "Liberation Serif", serif; color: #666; }
.fn small { font-size: 11px; }
.fbox { flex: 1; margin-left: 3px; height: 63px; border: 1px solid #c0c0c0; background: #fff; display: flex; align-items: flex-start; }
.fbox textarea { flex: 1; height: 100%; resize: none; }
.fbox button { padding: 8px 4px; }

/* worksheet */
.sheet { flex: 1; min-height: 0; display: flex; }
.viewport { flex: 1; min-width: 0; overflow: hidden; position: relative; border-right: 1px solid #9b9b9b; background: #fff; }
table { table-layout: fixed; border-collapse: separate; border-spacing: 0; width: 0; color: #000; font-size: 13px; line-height: 19px; }
.c-head { width: 26px; }
.c-std { width: 64px; }
.c-name { width: 111px; }
th, td { height: 20px; padding: 0 2px; font-weight: 400; white-space: nowrap; overflow: hidden; border-right: 1px solid #d0d0d0; border-bottom: 1px solid #d0d0d0; }
td { text-align: left; }
th { background: #e6e6e6; border-color: #b4b4b4; text-align: center; padding: 0; }
thead th { border-bottom-color: #9b9b9b; }
thead th.sel { background: #d2d2d2; color: #46705a; border-bottom: 2px solid #217346; }
tbody th { border-right-color: #9b9b9b; }
tbody th.sel { background: #d2d2d2; color: #46705a; border-right: 2px solid #217346; }
.corner::after { content: ""; display: block; margin: 3px 4px 0 auto; width: 0; border: 6px solid transparent; border-right-color: #b4b4b4; border-bottom-color: #b4b4b4; }
.num { text-align: right; }
.mid { text-align: center; }
.mark-y { background: #ff0; border-color: #ff0; color: #3c3c00; }
.cursor { position: relative; overflow: visible; }
.cursor::before { content: ""; position: absolute; inset: -2px; border: 2px solid #217346; }
.cursor::after { content: ""; position: absolute; right: -3px; bottom: -3px; width: 6px; height: 6px; background: #217346; border: solid #fff; border-width: 1px 0 0 1px; }
.callout { position: absolute; left: 393px; top: 139px; width: 231px; height: 86px; padding: 8px 13px; border-radius: 14px; border: 1px solid #41719c; background: #5b9bd5; color: #fff; font-size: 13px; line-height: 18px; }
.vscroll { width: 21px; padding: 2px 3px 0; display: flex; flex-direction: column; }
.vscroll button, .hscroll button { width: 15px; height: 15px; flex: none; background: #fff; border: 1px solid #b4b4b4; display: flex; align-items: center; justify-content: center; }
.thumb { flex: 1; background: #fff; border: 1px solid #b4b4b4; }
.track { height: 21px; background: #dadada; }

/* sheet tabs */
.sheetbar { flex: none; height: 29px; border-top: 1px solid #9b9b9b; border-bottom: 1px solid #c2c2c2; display: flex; align-items: center; padding: 0 21px 1px 0; }
.sheetnav { width: 100px; padding-left: 27px; display: flex; gap: 25px; }
.sheetnav .caret.left { border-right-color: #bbb; }
.sheetnav .caret.right { border-left-color: #bbb; }
.sheettab { width: 53px; height: 25px; align-self: flex-start; margin-top: -1px; background: #fff; border: 1px solid #b4b4b4; border-width: 0 1px; border-bottom: 2px solid #217346; color: #217346; font-weight: 700; font-size: 12px; line-height: 26px; text-align: center; }
.add { margin-left: 33px; }
.hscroll { width: 730px; margin-left: 16px; display: flex; }
.hthumb { flex: 1; background: #fff; border: 1px solid #b4b4b4; border-left-width: 2px; }
.htrack { width: 25px; background: #dadada; }

/* status bar */
.status { flex: none; height: 21px; background: #f1f1f1; display: flex; align-items: center; padding: 0 8px 2px 7px; }
.ready { width: 45px; }
.lock { width: 91px; }
.view { width: 39px; height: 20px; display: flex; align-items: center; justify-content: center; }
.view.on { background: #c6c6c6; }
.zoom-btn { width: 14px; display: flex; justify-content: center; }
.status input { appearance: none; width: 102px; height: 12px; background: linear-gradient(#aaa, #aaa) center / 100% 1px no-repeat; }
.status input::-webkit-slider-thumb { appearance: none; width: 4px; height: 11px; background: #666; }
.pctval { width: 39px; text-align: right; }

/* taskbar */
.taskbar { flex: none; height: 40px; position: relative; display: flex; align-items: stretch; overflow: hidden; border-top: 1px solid #12304f; box-shadow: inset 0 1px #8fb3cf; color: #fff; background: linear-gradient(90deg, #2d79a8, #6094b4 9%, #2c73a0 12%, #3a7aa2 32%, #2d6ba3 42%, #2568a0 54%, #1b5b8b 61%, #256494 67%, #194e82 74%, #184b82 100%); font-size: 12px; }
.streak { position: absolute; left: 1300px; top: 0; }
.pin { width: 62px; display: flex; align-items: center; justify-content: center; }
.pin.orb { width: 55px; }
.task { position: relative; width: 158px; margin-left: 4px; display: flex; align-items: center; gap: 5px; padding: 0 0 2px 9px; border: 1px solid #19384f; border-radius: 3px; box-shadow: inset 0 0 0 1px #a3c3d6; background: linear-gradient(160deg, #a5c3d6, #5f92b3 35%, #4485ab); white-space: nowrap; }
.fox { width: 66px; }
.fox + .task { margin-left: 0; }
.task.current { background: linear-gradient(160deg, #f0f7f5, #a9cfc2 40%, #7fb29f); box-shadow: inset 0 0 0 1px #dcefe8; text-shadow: 0 0 2px #577; }
.tray { display: flex; align-items: center; gap: 15px; width: 232px; font-size: 11px; }
.tray .lang { width: 14px; }
.clock { margin-left: auto; width: 64px; align-self: flex-start; padding-top: 4px; display: flex; flex-direction: column; line-height: 17px; }
.clock span:first-child { padding-left: 14px; }
.desktop { width: 14px; border: 1px solid #8299b8; background: linear-gradient(135deg, #7f93b5, #244a7c); }
.mark { position: absolute; display: flex; align-items: flex-start; font-family: Lato, sans-serif; white-space: nowrap; }
.mark .thin { font-weight: 300; }
.mark .fat { font-weight: 900; color: #45b04c; }
.mark.one { right: 28px; top: -2px; font-size: 36px; line-height: 36px; color: #122b45; }
.mark.one .thin { margin-left: 2px; width: 121px; }
.mark.two { right: 1px; top: 12px; font-size: 28px; line-height: 30px; color: #fff; }
.mark.two svg { margin-right: 5px; }
.mark.two .fat { margin-left: 4px; font-size: 26px; }
```
FILE: script.js
```js
const columns = ["A","B","C","D","E","F","G","H","I","J","K","L","M","N","O","P","Q","R","S","T","U","V","W","X","Y","Z","AA","AB","AC"];
const headings = { A: "D", B: "S", C: "Sicili", D: "Rütbesi", E: "Adı Soyadı", F: "Telefon", G: "Büro", H: "Grup", I: "Tim", J: "Görevi", K: "Dönem", L: "Kan", M: "Kurs", N: "bas", O: "bit", P: "Pasif", Q: "Başlama", R: "Bitiş", S: "Gün/Toplam", T: "Açıklama" };
const ids = [400722, 212313, 459496, 214564, 400722, 789564, 454903, 896546, 404459, 879645, 404459, 645312, 405013, 405013, 454903, 461803, 461803, 441093, 441093];
const duty = "AAAAAABBBCCCDDDDEEE";
const end = [9, 9, 9, 9, 9, 18, 9, 18, 9, 18, 9, 18, 9, 18, 9, 18];

function value(col, row) {
  if (row === 2) return headings[col] || "";
  const i = row - 3;
  if (i < 0 || i >= ids.length) return "";
  if (col === "C") return ids[i];
  if (col === "E") return `${i + 1}. Personel`;
  if (col === "J") return duty[i];
  if (col === "N" && i < end.length) return "09:00";
  if (col === "O" && i < end.length) return end[i] === 9 ? "09:00" : "18:00";
  if (col === "T" && i < 18) return i < 5 ? "adana" : i < 10 ? "izmir" : "ankara";
  return "";
}

function cls(col, row) {
  if (row === 2 && "PQR".includes(col)) return "mark-y";
  if (row === 22 && col === "I") return "cursor";
  if (col === "C") return "mid";
  if (row > 2 && (col === "N" || col === "O")) return "num";
  return "";
}

let html = '<colgroup><col class="c-head">' + columns.map(c => `<col class="${c === "E" ? "c-name" : "c-std"}">`).join("") + "</colgroup>";
html += '<thead><tr><th class="corner"></th>' + columns.map(c => `<th scope="col" class="${c === "I" ? "sel" : ""}">${c}</th>`).join("") + "</tr></thead><tbody>";
for (let r = 1; r <= 60; r++) {
  html += `<tr><th scope="row" class="${r === 22 ? "sel" : ""}">${r}</th>` + columns.map(c => `<td class="${cls(c, r)}">${value(c, r)}</td>`).join("") + "</tr>";
}
document.getElementById("grid").innerHTML = html + "</tbody>";
```
